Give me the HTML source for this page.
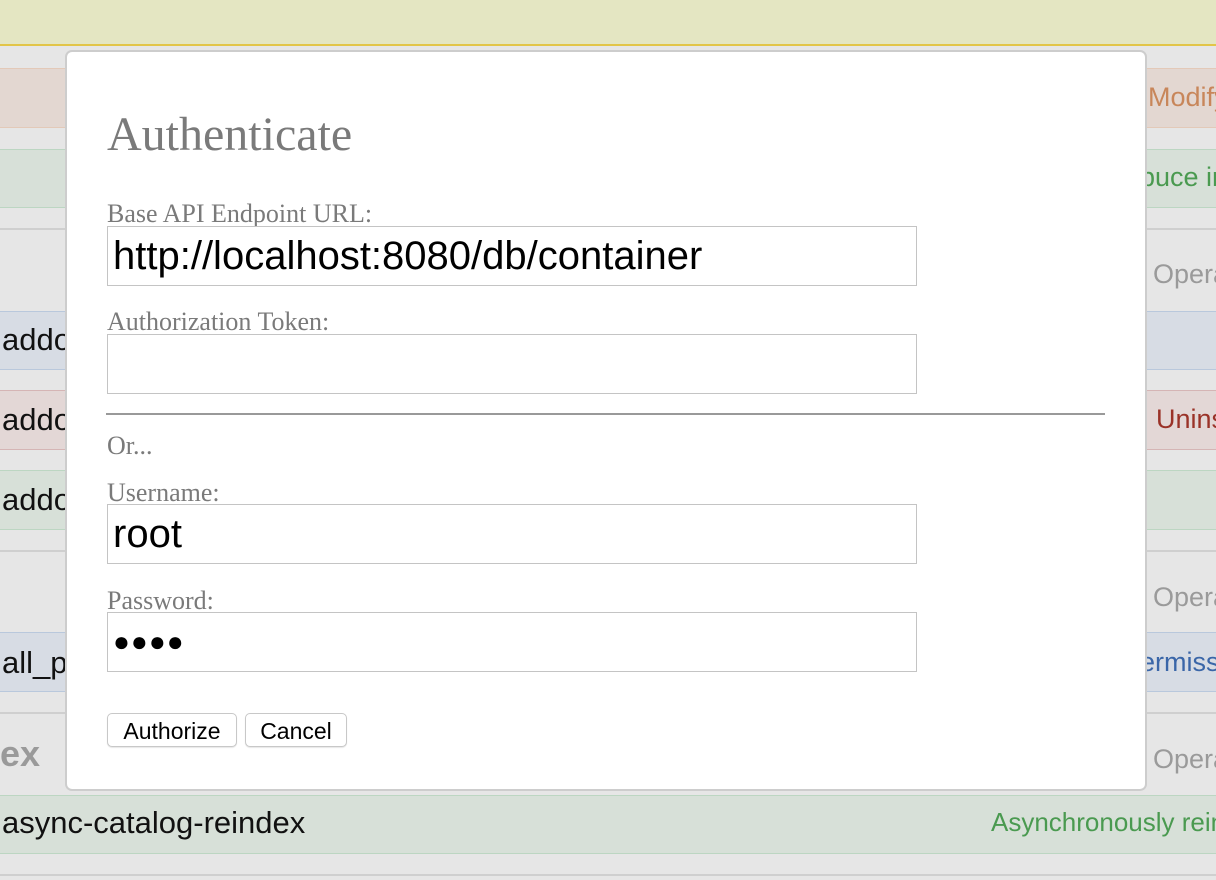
<!DOCTYPE html>
<html><head><style>
*{box-sizing:border-box;margin:0;padding:0}
body{width:1216px;height:880px;background:#e6e6e6;position:relative;overflow:hidden;font-family:"Liberation Sans",sans-serif}
.a{position:absolute}
.row{position:absolute;left:0;width:1216px;border-top:1px solid;border-bottom:1px solid}
.t{position:absolute;font-size:31px;white-space:nowrap}
.r{font-size:27px}
.sep{position:absolute;left:0;width:1216px;height:2px;background:#cfcfcf}
.lbl{position:absolute;left:107px;font-family:"Liberation Serif",serif;font-size:26px;color:#7a7a7a;line-height:30px}
.in{position:absolute;left:107px;width:810px;height:60px;border:1px solid #c4c4c4;background:#fff;font-size:40px;color:#000;padding-left:5px;line-height:58px}
.btn{position:absolute;top:713px;height:34px;border:1px solid #c8c8c8;border-radius:5px;background:#fff;font-size:23px;line-height:34px;text-align:center;color:#000;box-shadow:0 1px 1px rgba(0,0,0,.1)}
</style></head><body>
<div class="a" style="left:0;top:0;width:1216px;height:46px;background:#e4e6c2;border-bottom:2px solid #e2c548"></div>
<div class="row" style="top:68px;height:60px;background:#e3d7d1;border-color:#e3c9b8"></div>
<div class="t r" style="left:1148px;top:82px;color:#c8865a">Modify</div>
<div class="row" style="top:149px;height:59px;background:#d7e0d8;border-color:#bcd6c2"></div>
<div class="t r" style="left:1140px;top:162px;color:#4a9a50">puce in</div>
<div class="sep" style="top:228px"></div>
<div class="t r" style="left:1153px;top:259px;color:#9a9a9a">Opera</div>
<div class="row" style="top:311px;height:59px;background:#d7dce4;border-color:#b9c8dc"></div>
<div class="t" style="left:2px;top:322px;color:#111">addo</div>
<div class="row" style="top:390px;height:60px;background:#e3d7d6;border-color:#d5b5b5"></div>
<div class="t" style="left:2px;top:402px;color:#111">addo</div>
<div class="t r" style="left:1156px;top:404px;color:#9a3228">Unins</div>
<div class="row" style="top:470px;height:60px;background:#d7e0d8;border-color:#bcd6c2"></div>
<div class="t" style="left:2px;top:482px;color:#111">addo</div>
<div class="sep" style="top:550px"></div>
<div class="t r" style="left:1153px;top:582px;color:#9a9a9a">Opera</div>
<div class="row" style="top:632px;height:60px;background:#d7dce4;border-color:#b9c8dc"></div>
<div class="t" style="left:2px;top:645px;color:#111">all_p</div>
<div class="t r" style="left:1140px;top:647px;color:#3a66a8">ermiss</div>
<div class="sep" style="top:712px"></div>
<div class="t" style="left:0;top:733px;color:#9a9a9a;font-weight:bold;font-size:36px">ex</div>
<div class="t r" style="left:1153px;top:744px;color:#9a9a9a">Opera</div>
<div class="row" style="top:795px;height:59px;background:#d7e0d8;border-color:#bcd6c2"></div>
<div class="t" style="left:2px;top:805px;color:#111">async-catalog-reindex</div>
<div class="t" style="left:991px;top:807px;color:#4a9a50;font-size:26px">Asynchronously rein</div>
<div class="sep" style="top:874px"></div>

<div class="a" style="left:65px;top:50px;width:1082px;height:741px;background:#fff;border:2px solid #cdcdcd;border-radius:7px"></div>
<div class="a" style="left:107px;top:107px;font-family:'Liberation Serif',serif;font-size:48px;color:#7a7a7a;line-height:56px">Authenticate</div>
<div class="lbl" style="top:199px">Base API Endpoint URL:</div>
<div class="in" style="top:226px">http://localhost:8080/db/container</div>
<div class="lbl" style="top:307px">Authorization Token:</div>
<div class="in" style="top:334px"></div>
<div class="a" style="left:106px;top:413px;width:999px;height:2px;background:#999"></div>
<div class="lbl" style="top:431px">Or...</div>
<div class="lbl" style="top:478px">Username:</div>
<div class="in" style="top:504px">root</div>
<div class="lbl" style="top:586px">Password:</div>
<div class="in" style="top:612px;font-size:28px;letter-spacing:1px">●●●●</div>
<div class="btn" style="left:107px;width:130px">Authorize</div>
<div class="btn" style="left:245px;width:102px">Cancel</div>
</body></html>
